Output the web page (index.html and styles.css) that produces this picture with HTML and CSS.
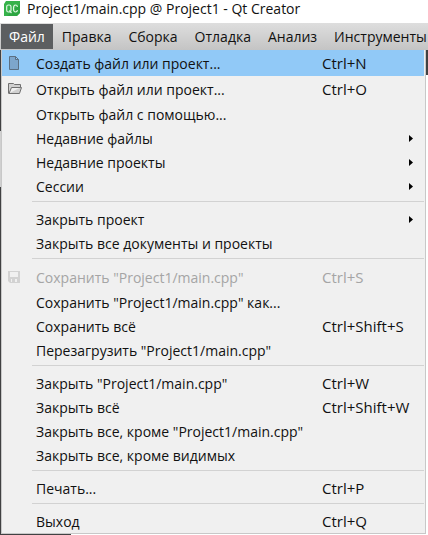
FILE: index.html
```html
<!DOCTYPE html>
<html lang="ru">
<head>
<meta charset="utf-8">
<meta name="viewport" content="width=device-width, initial-scale=1">
<title>Project1/main.cpp @ Project1 - Qt Creator</title>
<link rel="stylesheet" href="styles.css">
</head>
<body>
<header class="titlebar">
  <svg class="logo" width="17" height="15" viewBox="0 0 17 15" aria-hidden="true">
    <path d="M2 0H16V12L13 15H0V3Z" fill="#36b24a"/>
    <path d="M16 3V12L13 15H3Z" fill="#239a3a" opacity=".5"/>
    <rect x="2.7" y="4" width="4.3" height="7" rx="1.8" fill="none" stroke="#e0f6e3" stroke-width="1.2"/>
    <path d="M5.3 9.5L7.5 12M13.5 5.8Q13.1 4 11.5 4Q9.5 4 9.5 7.5Q9.5 11 11.5 11Q13.1 11 13.5 9.2" fill="none" stroke="#e0f6e3" stroke-width="1.2"/>
  </svg>
  <h1 class="title">Project1/main.cpp @ Project1 - Qt Creator</h1>
</header>
<nav class="menubar">
  <button class="tab active" type="button">Файл</button>
  <button class="tab" type="button">Правка</button>
  <button class="tab" type="button">Сборка</button>
  <button class="tab" type="button">Отладка</button>
  <button class="tab" type="button">Анализ</button>
  <button class="tab" type="button">Инструменты</button>
</nav>
<main class="workspace">
  <div class="menu">
    <button class="item tall selected" type="button">
      <svg class="icon" width="14" height="14" viewBox="0 0 14 14" aria-hidden="true"><path d="M1.5 .5H7.5L10.5 3.5V13.5H1.5ZM7.5 .5V3.5H10.5" fill="#7da6cc" stroke="#5b6f82"/></svg>
      <span class="label">Создать файл или проект...</span><kbd class="key">Ctrl+N</kbd>
    </button>
    <button class="item tall" type="button">
      <svg class="icon" width="14" height="14" viewBox="0 0 14 14" aria-hidden="true"><path d="M.5 11.5V1.5H5.5L6.5 2.5H12.5V5.5H3.5L1 11.5H11.5L13.5 5.5H12.5" fill="#d0d0d0" stroke="#707070"/></svg>
      <span class="label">Открыть файл или проект...</span><kbd class="key">Ctrl+O</kbd>
    </button>
    <button class="item" type="button"><span class="label">Открыть файл с помощью...</span></button>
    <button class="item" type="button"><span class="label">Недавние файлы</span><svg class="arrow" width="4" height="7" viewBox="0 0 4 7" aria-hidden="true"><path d="M0 0L4 3.5L0 7Z"/></svg></button>
    <button class="item" type="button"><span class="label">Недавние проекты</span><svg class="arrow" width="4" height="7" viewBox="0 0 4 7" aria-hidden="true"><path d="M0 0L4 3.5L0 7Z"/></svg></button>
    <button class="item" type="button"><span class="label">Сессии</span><svg class="arrow" width="4" height="7" viewBox="0 0 4 7" aria-hidden="true"><path d="M0 0L4 3.5L0 7Z"/></svg></button>
    <hr class="separator">
    <button class="item" type="button"><span class="label">Закрыть проект</span><svg class="arrow" width="4" height="7" viewBox="0 0 4 7" aria-hidden="true"><path d="M0 0L4 3.5L0 7Z"/></svg></button>
    <button class="item" type="button"><span class="label">Закрыть все документы и проекты</span></button>
    <hr class="separator">
    <button class="item tall" type="button" disabled>
      <svg class="icon" width="14" height="14" viewBox="0 0 14 14" aria-hidden="true"><path d="M0 1H12V13H2L0 11ZM2 2V7H10V2ZM3 9V12H4V9ZM7 9V12H9V9Z" fill="#d2d2d2" fill-rule="evenodd"/></svg>
      <span class="label">Сохранить "Project1/main.cpp"</span><kbd class="key">Ctrl+S</kbd>
    </button>
    <button class="item" type="button"><span class="label">Сохранить "Project1/main.cpp" как...</span></button>
    <button class="item" type="button"><span class="label">Сохранить всё</span><kbd class="key">Ctrl+Shift+S</kbd></button>
    <button class="item" type="button"><span class="label">Перезагрузить "Project1/main.cpp"</span></button>
    <hr class="separator">
    <button class="item" type="button"><span class="label">Закрыть "Project1/main.cpp"</span><kbd class="key">Ctrl+W</kbd></button>
    <button class="item" type="button"><span class="label">Закрыть всё</span><kbd class="key">Ctrl+Shift+W</kbd></button>
    <button class="item" type="button"><span class="label">Закрыть все, кроме "Project1/main.cpp"</span></button>
    <button class="item" type="button"><span class="label">Закрыть все, кроме видимых</span></button>
    <hr class="separator">
    <button class="item" type="button"><span class="label">Печать...</span><kbd class="key">Ctrl+P</kbd></button>
    <hr class="separator">
    <button class="item" type="button"><span class="label">Выход</span><kbd class="key">Ctrl+Q</kbd></button>
  </div>
</main>
</body>
</html>
```
FILE: styles.css
```css
* { box-sizing: border-box; }
body {
  margin: 0;
  overflow: hidden;
  background: #fff;
  color: #111;
  font-family: "Open Sans", "Noto Sans", sans-serif;
  font-size: 14px;
}
button {
  border: 0;
  margin: 0;
  background: none;
  color: inherit;
  font: inherit;
  text-align: left;
  white-space: nowrap;
}
.titlebar {
  display: flex;
  align-items: center;
  gap: 6px;
  height: 23px;
  padding: 0 4px 6px;
}
.title {
  margin: 0;
  font-size: 14px;
  font-weight: 400;
  line-height: 17px;
  white-space: nowrap;
}
.menubar {
  display: flex;
  gap: 1px;
  height: 27px;
  padding: 1px 0 1px 1px;
  overflow: hidden;
  background: linear-gradient(#dedede, #c4c4c4);
}
.tab {
  flex: none;
  padding: 0 8px;
  line-height: 25px;
}
.tab.active {
  background: #5c5e60;
  color: #fff;
}
.workspace {
  padding: 0 2px 1px 1px;
  background:
    linear-gradient(#404142 25px, transparent 25px) right / 2px 100% no-repeat,
    linear-gradient(#404142 81px, #d0d0d0 81px 137px, #404142 137px) left / 1px 100% no-repeat,
    linear-gradient(#404142, #404142) left bottom / 71px 1px no-repeat,
    #fff;
}
.menu {
  display: flex;
  flex-direction: column;
  border: 1px solid #c8c8c8;
  border-top: 0;
  background: #f0f0f0;
  padding-right: 1px;
}
.item {
  display: grid;
  grid-template-columns: 28px 1fr 102px;
  align-items: center;
  height: 24px;
  padding: 0 0 0 6px;
}
.item.tall { height: 26px; }
.item.selected { background: #91c9f7; }
.item:disabled { color: #a5a5a5; }
.icon, .label, .key, .arrow { grid-row: 1; }
.icon { grid-column: 1; }
.label { grid-column: 2; }
.key {
  grid-column: 3;
  font-family: inherit;
  font-size: 15px;
}
.arrow {
  grid-column: 3;
  justify-self: end;
  margin-right: 11px;
}
.separator {
  align-self: stretch;
  height: 1px;
  margin: 3px 0 5px 30px;
  border: 0;
  background: #d2d2d2;
}
```
